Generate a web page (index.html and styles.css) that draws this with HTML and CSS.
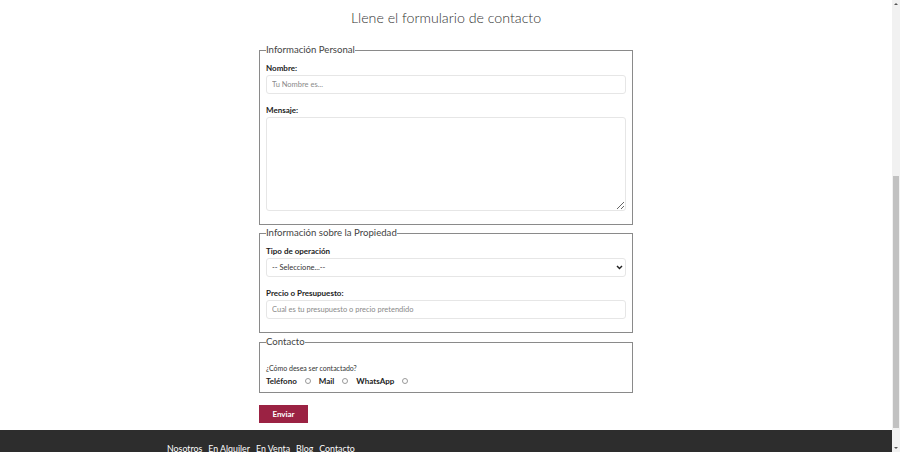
FILE: index.html
```html
<!DOCTYPE html>
<html lang="es">
<head>
<meta charset="utf-8">
<title>Contacto</title>
<link rel="stylesheet" href="styles.css">
</head>
<body>
<div class="page">
  <div class="main">
    <div class="content">
      <h1 class="title">Llene el formulario de contacto</h1>
      <form class="form">
        <fieldset class="group">
          <legend class="legend">Información Personal</legend>
          <label class="label" for="nombre">Nombre:</label>
          <input class="field" id="nombre" type="text" placeholder="Tu Nombre es...">
          <label class="label label-gap" for="mensaje">Mensaje:</label>
          <textarea class="field area" id="mensaje"></textarea>
        </fieldset>

        <fieldset class="group">
          <legend class="legend">Información sobre la Propiedad</legend>
          <label class="label" for="tipo">Tipo de operación</label>
          <div class="select-wrap">
            <select class="field select" id="tipo">
              <option>-- Seleccione...--</option>
            </select>
            <svg class="chevron" width="7" height="5" viewBox="0 0 7 5"><path d="M1 1 L3.5 3.6 L6 1" fill="none" stroke="#222" stroke-width="1.4"/></svg>
          </div>
          <label class="label label-gap" for="precio">Precio o Presupuesto:</label>
          <input class="field" id="precio" type="text" placeholder="Cual es tu presupuesto o precio pretendido">
        </fieldset>

        <fieldset class="group group-contact">
          <legend class="legend">Contacto</legend>
          <p class="question">¿Cómo desea ser contactado?</p>
          <div class="radios">
            <label class="radio-label" for="r1">Teléfono</label><input class="radio" type="radio" name="c" id="r1">
            <label class="radio-label" for="r2">Mail</label><input class="radio" type="radio" name="c" id="r2">
            <label class="radio-label" for="r3">WhatsApp</label><input class="radio" type="radio" name="c" id="r3">
          </div>
        </fieldset>

        <button class="btn" type="button">Enviar</button>
      </form>
    </div>
    <footer class="footer">
      <nav class="nav">
        <a href="#">Nosotros</a>
        <a href="#">En Alquiler</a>
        <a href="#">En Venta</a>
        <a href="#">Blog</a>
        <a href="#">Contacto</a>
      </nav>
    </footer>
  </div>
  <div class="scrollbar">
    <div class="arrow arrow-up"></div>
    <div class="track">
      <div class="thumb"></div>
    </div>
    <div class="arrow arrow-down"></div>
  </div>
</div>
</body>
</html>
```

FILE: styles.css
```css
* { box-sizing: border-box; }
html, body { margin: 0; padding: 0; }
body {
  font-family: Lato, "Open Sans", sans-serif;
  background: #fff;
  color: #222;
}
.page {
  display: flex;
  width: 900px;
  height: 452px;
  overflow: hidden;
}
.main {
  width: 892px;
  display: flex;
  flex-direction: column;
}
.content {
  flex: 1;
}
.title {
  margin: 6px 0 0;
  font-size: 14.2px;
  line-height: 24px;
  font-weight: 300;
  color: #333;
  text-align: center;
}
.form {
  width: 374px;
  margin: 14px auto 0;
  display: flex;
  flex-direction: column;
}
.group {
  margin: 0 0 2px;
  padding: 0 6px 13px 6px;
  border: 1px solid #8a8a8a;
  display: flex;
  flex-direction: column;
  min-width: 0;
}
.legend {
  padding: 0;
  font-size: 9.6px;
  line-height: 12px;
  color: #444;
  font-weight: 400;
}
.label {
  display: block;
  margin-top: 7px;
  margin-bottom: 2px;
  font-size: 8px;
  line-height: 10px;
  font-weight: 700;
  color: #222;
}
.label-gap { margin-top: 11px; }
.field {
  display: block;
  width: 100%;
  height: 19px;
  margin: 0;
  padding: 0 5px;
  border: 1px solid #e6e6e6;
  border-radius: 3px;
  background: #fff;
  font-family: Lato, sans-serif;
  font-size: 7.5px;
  color: #555;
  outline: none;
}
.field::placeholder { color: #8a8a8a; }
.area {
  height: 94px;
  resize: vertical;
  padding: 4px 5px;
}
.select-wrap { position: relative; }
.select {
  appearance: none;
  -webkit-appearance: none;
  color: #333;
}
.chevron {
  position: absolute;
  right: 3px;
  top: 7px;
}
.group-contact { padding-bottom: 5px; margin-top: 1px; }
.question {
  margin: 15px 0 0;
  font-size: 7px;
  line-height: 10px;
  color: #333;
}
.radios {
  display: flex;
  align-items: center;
  margin-top: 2px;
  height: 12px;
}
.radio-label {
  font-size: 8px;
  font-weight: 700;
  color: #222;
}
.radio {
  appearance: none;
  -webkit-appearance: none;
  width: 6px;
  height: 6px;
  margin: 0 8px 0 8px;
  border: 1px solid #9a9a9a;
  border-radius: 50%;
  background: #fff;
}
.btn {
  align-self: flex-start;
  margin-top: 10px;
  width: 49px;
  height: 18px;
  padding: 0;
  border: none;
  background: #9b2243;
  color: #fff;
  font-family: Lato, sans-serif;
  font-weight: 700;
  font-size: 8px;
}
.footer {
  height: 22px;
  background: #2d2d2d;
  padding-left: 167px;
}
.nav {
  display: flex;
  gap: 6px;
  padding-top: 13px;
}
.nav a {
  color: #fff;
  text-decoration: none;
  font-size: 8.8px;
  line-height: 12px;
}
.scrollbar {
  width: 8px;
  height: 452px;
  background: #f1f1f1;
  display: flex;
  flex-direction: column;
}
.arrow {
  height: 8px;
  position: relative;
}
.arrow-up::after, .arrow-down::after {
  content: "";
  position: absolute;
  left: 2px;
  width: 0;
  height: 0;
  border-left: 2px solid transparent;
  border-right: 2px solid transparent;
}
.arrow-up::after { top: 3px; border-bottom: 2px solid #555; }
.arrow-down::after { top: 3px; border-top: 2px solid #555; }
.track {
  flex: 1;
  padding-top: 168px;
  padding-bottom: 16px;
  display: flex;
  justify-content: center;
}
.thumb {
  width: 6px;
  height: 252px;
  background: #c1c1c1;
}
```
